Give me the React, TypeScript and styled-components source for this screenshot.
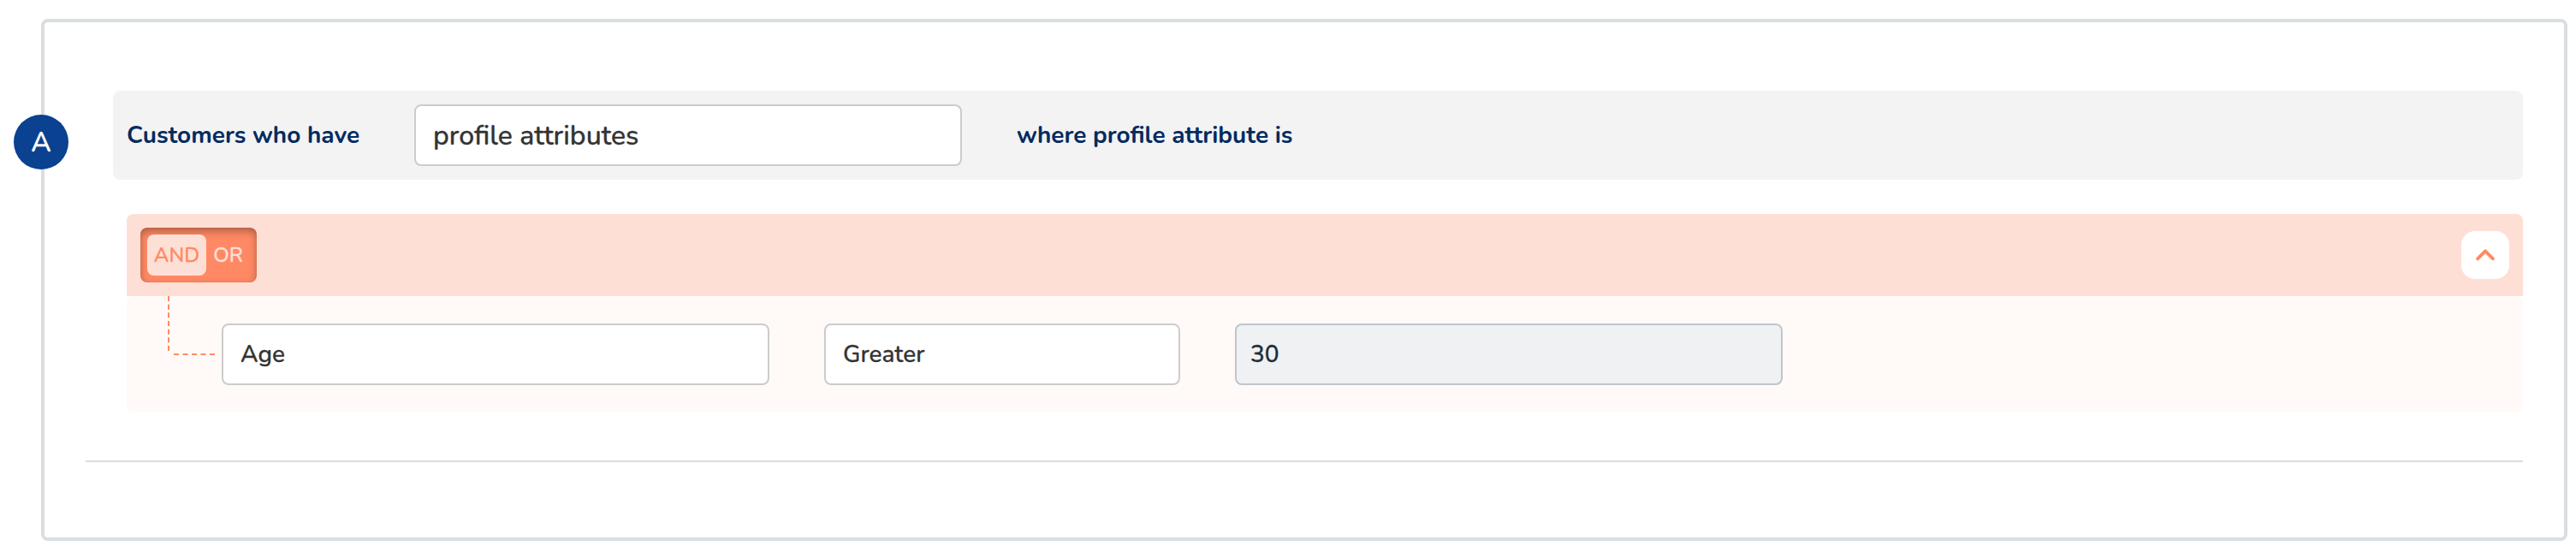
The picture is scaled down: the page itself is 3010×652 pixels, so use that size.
import styled, { createGlobalStyle } from 'styled-components'


interface IFieldProps {
    $width: number,
    $size?: number
}

interface ILabelProps {
    $indent?: number
}

interface IOptionProps {
    $active?: boolean
}

const GlobalStyle = createGlobalStyle`
    * {
        box-sizing: border-box;
    }

    body {
        margin: 0;
        background-color: #fff;
        font-family: Nunito, Lato, 'Open Sans', sans-serif;
    }
`

const Page = styled.main`
    width: 3010px;
    height: 652px;
    padding: 22px 10px 20px 48px;
`

const Card = styled.section`
    position: relative;
    height: 610px;
    padding: 80px 48px 0;
    border: 4px solid #d9dee2;
    border-radius: 8px;
`

const Badge = styled.div`
    position: absolute;
    top: 108px;
    left: -36px;
    width: 64px;
    height: 64px;
    display: flex;
    align-items: center;
    justify-content: center;
    border-radius: 50%;
    background-color: #0a4190;
    color: #fff;
    font-size: 32px;
    font-weight: 500;
    -webkit-text-stroke: 0.3px currentColor;
`

const ConditionBar = styled.div`
    height: 104px;
    margin-left: 32px;
    padding-left: 16px;
    display: flex;
    align-items: center;
    border-radius: 8px;
    background-color: #f3f3f3;
`

const Label = styled.span<ILabelProps>`
    width: 336px;
    margin-left: ${props => props.$indent || 0}px;
    color: #032b61;
    font-size: 28px;
    font-weight: 700;
    line-height: 40px;
    white-space: nowrap;
`

const Field = styled.div<IFieldProps>`
    width: ${props => props.$width}px;
    height: 72px;
    padding-left: 20px;
    display: flex;
    align-items: center;
    border: 2px solid #cccccc;
    border-radius: 8px;
    background-color: #fff;
    color: #333333;
    font-size: ${props => props.$size || 28}px;
    font-weight: 500;
    -webkit-text-stroke: 0.3px currentColor;
`

const ValueField = styled(Field)`
    padding-left: 16px;
    border-color: #bec6cd;
    background-color: #eff1f3;
    color: #212c35;
`

const Group = styled.div`
    margin: 40px 0 0 48px;
`

const GroupHeader = styled.div`
    height: 96px;
    padding: 0 16px;
    display: flex;
    align-items: center;
    justify-content: space-between;
    border-radius: 8px 8px 0 0;
    background-color: #fedfd6;
`

const Toggle = styled.div`
    width: 136px;
    height: 64px;
    padding: 8px;
    display: flex;
    border-radius: 8px;
    background-color: #ff8964;
    box-shadow: inset 0 4px 10px rgba(0, 0, 0, 0.32);
`

const Option = styled.span<IOptionProps>`
    width: ${props => props.$active ? 69 : 51}px;
    height: 48px;
    display: flex;
    align-items: center;
    justify-content: center;
    border-radius: 8px;
    background-color: ${props => props.$active ? '#fedfd6' : 'transparent'};
    color: ${props => props.$active ? '#ff8964' : '#fedfd6'};
    font-size: 24px;
    font-weight: 500;
    -webkit-text-stroke: 0.3px currentColor;
`

const CollapseButton = styled.button`
    width: 56px;
    height: 56px;
    padding: 0;
    display: flex;
    align-items: center;
    justify-content: center;
    border: none;
    border-radius: 16px;
    background-color: #fff;
`

const GroupBody = styled.div`
    height: 136px;
    padding-left: 48px;
    display: flex;
    border-radius: 8px;
    background-color: #fffaf7;
`

const Connector = styled.svg`
    width: 63px;
    height: 72px;
`

const Fields = styled.div`
    display: flex;
    gap: 64px;
    padding-top: 32px;
`

const Divider = styled.hr`
    height: 2px;
    margin: 56px 0 0;
    border: none;
    background-color: #d9dee2;
`

export default function App() {
    return (
        <>
            <GlobalStyle />
            <Page>
                <Card>
                    <Badge>A</Badge>
                    <ConditionBar>
                        <Label>Customers who have</Label>
                        <Field $width={640} $size={32}>profile attributes</Field>
                        <Label $indent={64}>where profile attribute is</Label>
                    </ConditionBar>
                    <Group>
                        <GroupHeader>
                            <Toggle>
                                <Option $active>AND</Option>
                                <Option>OR</Option>
                            </Toggle>
                            <CollapseButton aria-label="Collapse">
                                <svg width="24" height="16" viewBox="0 0 24 16" fill="none">
                                    <path d="M3 12.3L12 3.3L21 12.3" stroke="#ff8964" strokeWidth="3.8" strokeLinecap="round" strokeLinejoin="round" />
                                </svg>
                            </CollapseButton>
                        </GroupHeader>
                        <GroupBody>
                            <Connector viewBox="0 0 63 72" fill="none" stroke="#ff8964" strokeWidth="2">
                                <path d="M1 0V64" strokeDasharray="6 3.67" />
                                <path d="M7 68H55" strokeDasharray="6 4.5" />
                            </Connector>
                            <Fields>
                                <Field $width={640}>Age</Field>
                                <Field $width={416}>Greater</Field>
                                <ValueField $width={640}>30</ValueField>
                            </Fields>
                        </GroupBody>
                    </Group>
                    <Divider />
                </Card>
            </Page>
        </>
    )
}
